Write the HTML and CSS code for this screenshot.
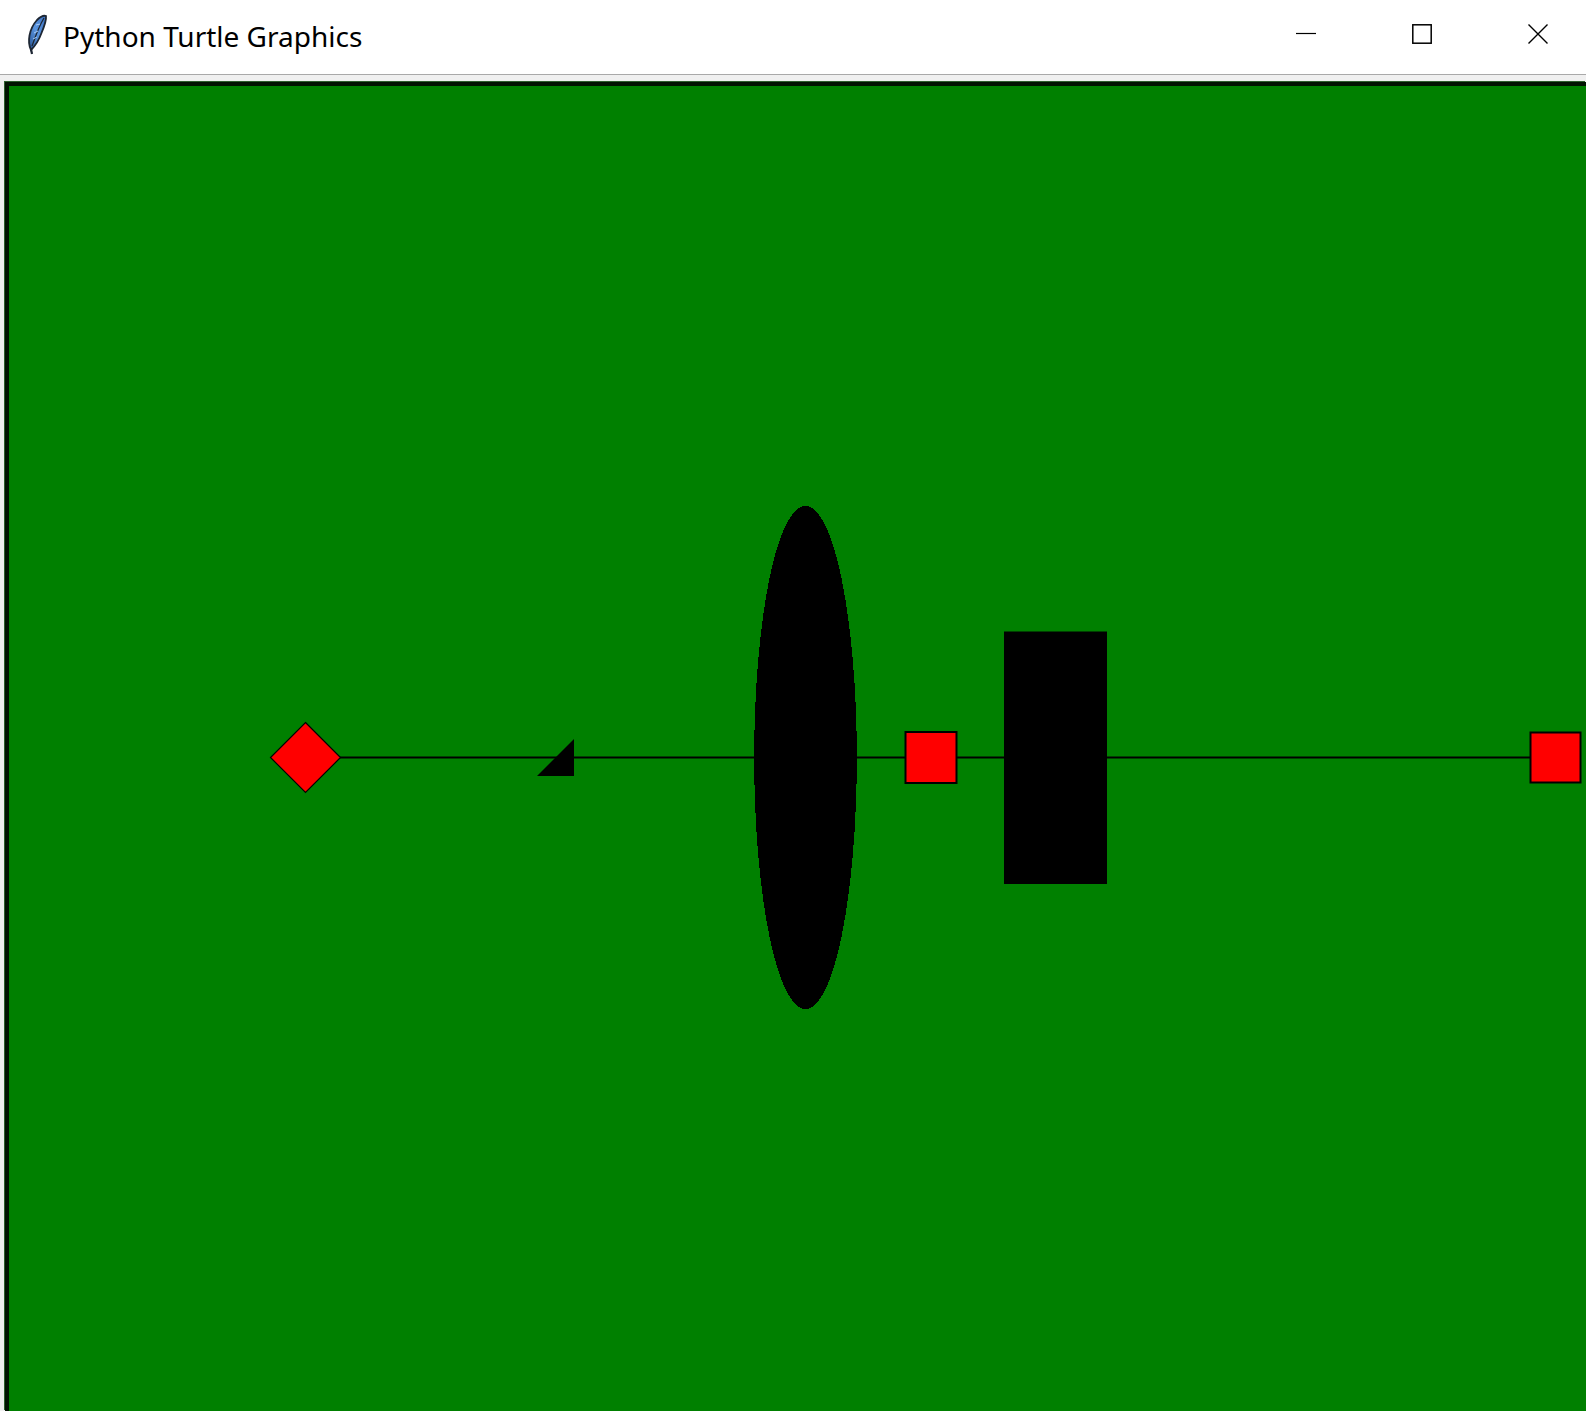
FILE: index.html
```html
<!DOCTYPE html>
<html>
<head>
<meta charset="utf-8">
<title>Python Turtle Graphics</title>
<link rel="stylesheet" href="styles.css">
</head>
<body>
<div class="window">
  <header class="titlebar">
    <svg class="app-icon" width="24" height="42" viewBox="0 0 24 42">
      <defs>
        <linearGradient id="fg" x1="0" y1="1" x2="1" y2="0">
          <stop offset="0" stop-color="#24508f"/>
          <stop offset="0.5" stop-color="#5a95e0"/>
          <stop offset="1" stop-color="#3a70c0"/>
        </linearGradient>
      </defs>
      <path d="M7 37 C 3 29, 5 16, 13 7 C 16 4, 19 2, 22 3 C 22.5 7, 20 14, 17.5 20 C 15 27, 11 33, 7 37 Z" fill="url(#fg)" stroke="#1d2633" stroke-width="1.8"/>
      <path d="M8 33 C 11 25, 14 15, 20 5" fill="none" stroke="#1d2633" stroke-width="1.3"/>
      <path d="M10 20 L14 18 M9 26 L13 24 M12 12 L16 11" stroke="#a9cdf7" stroke-width="1"/>
      <path d="M7 36 L8 41" stroke="#1d2633" stroke-width="2.2"/>
    </svg>
    <span class="title">Python Turtle Graphics</span>
    <div class="controls">
      <div class="ctl">
        <svg width="20" height="20" viewBox="0 0 20 20"><line x1="0" y1="9.5" x2="20" y2="9.5" stroke="#000" stroke-width="1.2"/></svg>
      </div>
      <div class="ctl">
        <svg width="20" height="20" viewBox="0 0 20 20"><rect x="0.8" y="0.8" width="18.4" height="18.4" fill="none" stroke="#000" stroke-width="1.5"/></svg>
      </div>
      <div class="ctl">
        <svg width="20" height="20" viewBox="0 0 20 20"><path d="M0.5 0.5 L19.5 19.5 M19.5 0.5 L0.5 19.5" stroke="#000" stroke-width="1.4"/></svg>
      </div>
    </div>
  </header>
  <main class="client">
    <div class="canvas">
      <svg class="drawing" width="1600" height="1400" viewBox="0 0 1600 1400">
        <g transform="translate(-9,-86)">
          <line x1="340" y1="757.5" x2="1531" y2="757.5" stroke="#000" stroke-width="2"/>
          <polygon points="305.5,722.5 340.5,757.5 305.5,792.5 270.5,757.5" fill="#ff0000" stroke="#000" stroke-width="1.2"/>
          <polygon points="537,776 574,776 574,739" fill="#000"/>
          <ellipse cx="805.5" cy="757.5" rx="51.3" ry="251.5" fill="#000" shape-rendering="crispEdges"/>
          <rect x="905.5" y="732" width="51" height="51" fill="#ff0000" stroke="#000" stroke-width="2"/>
          <rect x="1004" y="631.5" width="103" height="252.5" fill="#000"/>
          <rect x="1530.5" y="732.5" width="50" height="50" fill="#ff0000" stroke="#000" stroke-width="2"/>
        </g>
      </svg>
    </div>
  </main>
</div>
</body>
</html>
```
FILE: styles.css
```css
html, body {
  margin: 0;
  padding: 0;
  height: 100%;
  overflow: hidden;
  background: #f0f0f0;
}

.window {
  display: flex;
  flex-direction: column;
  height: 1411px;
  width: 1586px;
  overflow: hidden;
}

.titlebar {
  flex: 0 0 auto;
  height: 74px;
  background: #ffffff;
  border-bottom: 1px solid #a9a9a9;
  display: flex;
  align-items: flex-start;
  padding-left: 24px;
  box-sizing: content-box;
}

.app-icon {
  margin-top: 13px;
  flex: 0 0 auto;
}

.title {
  margin-left: 15px;
  font-family: "Noto Sans", "Open Sans", sans-serif;
  font-size: 28px;
  line-height: 72px;
  color: #000;
  white-space: nowrap;
}

.controls {
  margin-left: auto;
  margin-right: -10px;
  display: flex;
}

.ctl {
  width: 116px;
  height: 74px;
  display: flex;
  justify-content: center;
  align-items: flex-start;
  padding-top: 24px;
  box-sizing: border-box;
}

.ctl svg {
  display: block;
}

.client {
  flex: 1 1 auto;
  padding: 7px 0 0 5px;
  display: flex;
  min-height: 0;
}

.canvas {
  flex: 1 1 auto;
  background: #008000;
  border-left: 4px solid #021402;
  border-top: 4px solid #021402;
  box-shadow: -1px -1px 0 #2f5f2f;
  overflow: hidden;
  position: relative;
}

.drawing {
  display: block;
}
```
